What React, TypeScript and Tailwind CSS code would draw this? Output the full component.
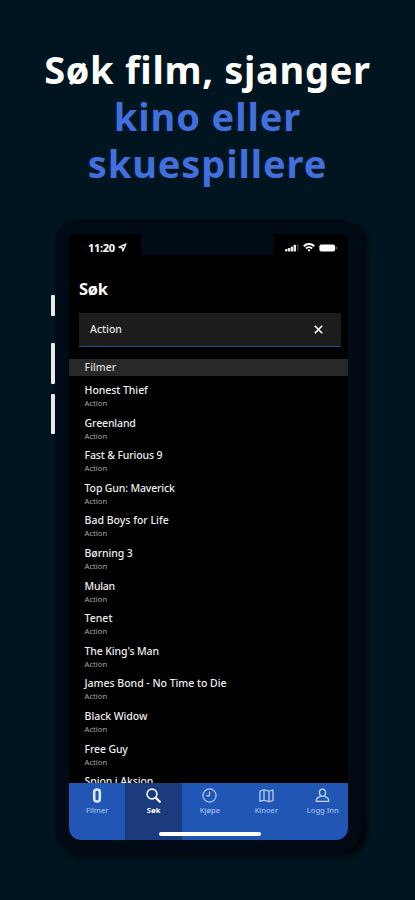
import type { ReactNode } from 'react';

interface Movie {
  title: string;
  genre: string;
  tracking: string;
}

interface TabProps {
  label: string;
  active?: boolean;
  children: ReactNode;
}

const MOVIES: Movie[] = [
  { title: 'Honest Thief', genre: 'Action', tracking: 'tracking-[-0.05px]' },
  { title: 'Greenland', genre: 'Action', tracking: 'tracking-[-0.15px]' },
  { title: 'Fast & Furious 9', genre: 'Action', tracking: 'tracking-[-0.15px]' },
  { title: 'Top Gun: Maverick', genre: 'Action', tracking: 'tracking-[-0.15px]' },
  { title: 'Bad Boys for Life', genre: 'Action', tracking: 'tracking-[0px]' },
  { title: 'Børning 3', genre: 'Action', tracking: 'tracking-[-0.1px]' },
  { title: 'Mulan', genre: 'Action', tracking: 'tracking-[-0.3px]' },
  { title: 'Tenet', genre: 'Action', tracking: 'tracking-[0px]' },
  { title: "The King's Man", genre: 'Action', tracking: 'tracking-[-0.12px]' },
  { title: 'James Bond - No Time to Die', genre: 'Action', tracking: 'tracking-[-0.02px]' },
  { title: 'Black Widow', genre: 'Action', tracking: 'tracking-[-0.05px]' },
  { title: 'Free Guy', genre: 'Action', tracking: 'tracking-[-0.15px]' },
  { title: 'Spion i Aksjon', genre: 'Action', tracking: 'tracking-[-0.1px]' },
];

function StatusBar() {
  return (
    <div className="flex h-5 shrink-0 justify-between">
      <div className="flex w-[72px] items-center pl-[19px] pt-[7px] text-[11px] leading-none font-bold text-white">
        <span className="tracking-[-0.3px]">11:20</span>
        <svg className="ml-[3px]" width="9" height="9" viewBox="0 0 9 9" fill="none" stroke="#e8e8e8" strokeWidth="1.4" strokeLinejoin="round">
          <path d="M8 1L1 4.200l3.300.5.500 3.300L8 1z" />
        </svg>
      </div>
      <div className="-mb-px w-[133px] rounded-b-[4px] bg-[#000b15]" />
      <div className="flex w-[74px] items-center gap-1 pt-[7px] pl-[11px]">
        <svg width="14" height="8" viewBox="0 0 14 8" fill="#e8e8e8">
          <rect x="0" y="5" width="2.5" height="2.500" rx=".4" />
          <rect x="2.900" y="4" width="2.500" height="3.500" rx=".4" />
          <rect x="5.800" y="2.500" width="2.500" height="5" rx=".4" />
          <rect x="8.700" y=".8" width="2.300" height="6.700" rx=".4" />
          <rect x="12" y="0" width="1.500" height="7.500" rx=".4" opacity=".25" />
        </svg>
        <svg width="12" height="9" viewBox="0 0 12 9" fill="none" stroke="#fff" strokeWidth="1.9">
          <path d="M.8 3.200a7.400 7.400 0 0 1 10.400 0M2.900 5.500a4.400 4.400 0 0 1 6.200 0" />
          <path d="M4.500 7L6 8.700 7.500 7A2 2 0 0 0 4.500 7z" fill="#fff" stroke="none" />
        </svg>
        <svg width="18" height="8" viewBox="0 0 18 8">
          <rect x=".4" y=".4" width="15.600" height="7.200" rx="1.800" fill="#fff" />
          <path d="M16.700 2.600v2.800c.7-.2.900-.8.900-1.400s-.2-1.200-.9-1.400z" fill="#bbb" />
        </svg>
      </div>
    </div>
  );
}

function MovieRow({ title, genre, tracking }: Movie) {
  return (
    <li className="h-[32.6px] shrink-0 pl-[15.6px] whitespace-nowrap">
      <p className={`text-[10.5px] leading-[15px] font-medium text-[#ededed] ${tracking}`}>{title}</p>
      <p className="text-[7.6px] leading-[10px] text-[#a8a8a8]">{genre}</p>
    </li>
  );
}

function Tab({ label, active, children }: TabProps) {
  return (
    <div
      className={`flex w-[56.4px] shrink-0 flex-col items-center pt-[5px] whitespace-nowrap ${
        active ? 'bg-[#1b3b7e] font-bold text-white' : 'bg-[#2156b5] text-[#b3cdf5]'
      }`}
    >
      <div className="flex h-[15px] items-center">{children}</div>
      <span className="mt-[2px] text-[7.6px] leading-[10px]">{label}</span>
    </div>
  );
}

export default function App() {
  return (
    <main className="flex h-[900px] w-[415px] flex-col overflow-hidden bg-[#00151f] font-['Noto_Sans',sans-serif]">
      <h1 className="h-[220px] shrink-0 pt-[46px] text-center text-[38px] leading-[47px] font-bold whitespace-nowrap text-white">
        <span className="block tracking-[0.7px]">Søk film, sjanger</span>
        <span className="block tracking-[0.9px] text-[#416fdd]">kino eller</span>
        <span className="block tracking-[0.9px] text-[#416fdd]">skuespillere</span>
      </h1>

      <div className="flex pl-[51px]">
        {/* volume and mute buttons */}
        <div className="flex w-[4px] shrink-0 flex-col pt-[75px]">
          <div className="h-[21px] rounded-[1px] bg-[#ececec]" />
          <div className="mt-[27px] h-[41px] rounded-[1px] bg-[#ececec]" />
          <div className="mt-[10px] h-10 rounded-[1px] bg-[#ececec]" />
        </div>

        <div className="h-[632px] w-[306px] rounded-[22px] bg-[#000b15] pt-[14px] pl-[14px] shadow-[5px_3px_5px_1px_#00060a]">
          <div className="flex h-[606px] w-[279px] flex-col overflow-hidden rounded-t-[6px] rounded-b-[12px] bg-black">
            <StatusBar />
            <h2 className="mt-[23px] pl-[10px] text-[16.5px] leading-[24px] font-bold tracking-[-0.3px] text-white">Søk</h2>

            <div className="mx-[10px] mt-[12px] flex h-[34px] w-[262px] shrink-0 items-center justify-between border-b border-[#254a87] bg-[#1c1c1c] pr-[18px] pl-[11px] text-[10.5px] font-medium text-[#e6e6e6]">
              <span>Action</span>
              <svg width="9" height="9" viewBox="0 0 9 9" stroke="#fff" strokeWidth="1.600">
                <path d="M.8.800l7.400 7.400M8.200.800L.8 8.200" />
              </svg>
            </div>

            <h3 className="mt-[12px] h-[17px] shrink-0 bg-[#282828] pl-[15.6px] text-[10.5px] leading-[17px] font-medium text-[#dcdcdc]">Filmer</h3>

            <ul className="flex min-h-0 flex-1 flex-col overflow-hidden pt-[7px]">
              {MOVIES.map((movie) => (
                <MovieRow key={movie.title} {...movie} />
              ))}
            </ul>

            <nav className="relative flex h-[57px] shrink-0">
              <Tab label="Filmer">
                <svg width="10" height="15" viewBox="0 0 10 15" fill="none">
                  <rect x="2.200" y="1.500" width="5.600" height="12" rx="2.500" stroke="#dbe8ff" strokeWidth="2.600" />
                </svg>
              </Tab>
              <Tab label="Søk" active>
                <svg width="15" height="15" viewBox="0 0 15 15" fill="none" stroke="#fff" strokeWidth="1.600" strokeLinecap="round">
                  <circle cx="6" cy="6" r="4.900" />
                  <path d="M9.800 9.800l4 4" strokeWidth="2.200" />
                </svg>
              </Tab>
              <Tab label="Kjøpe">
                <svg width="15" height="15" viewBox="0 0 15 15" fill="none" stroke="#b3cdf5" strokeWidth="1.200">
                  <circle cx="7.500" cy="7.500" r="6.600" />
                  <path d="M7.500 3.500v4.300H4.200" />
                </svg>
              </Tab>
              <Tab label="Kinoer">
                <svg width="15" height="15" viewBox="0 0 15 15" fill="none" stroke="#c6daf8" strokeWidth="1.200" strokeLinejoin="round">
                  <path d="M1 3l4-1.200 5 1.500 4-1.300v10.500l-4 1.200-5-1.500-4 1.200V3zM5 1.800v10.400M10 3.300v10.400" />
                </svg>
              </Tab>
              <Tab label="Logg Inn">
                <svg width="15" height="15" viewBox="0 0 15 15" fill="none" stroke="#c6daf8" strokeWidth="1.300" strokeLinejoin="round">
                  <path d="M7.500 1.200c-2 0-3 1.400-3 3.200 0 2 1.200 3.900 3 3.900s3-1.900 3-3.900c0-1.800-1-3.200-3-3.200z" />
                  <path d="M5.500 8.500L2.800 9.600c-1.200.5-1.500 1.600-1.500 3.700h12.400c0-2.100-.3-3.200-1.500-3.700L9.500 8.500" />
                </svg>
              </Tab>
              <div className="absolute bottom-[4px] left-[90px] h-[4px] w-[102px] rounded-full bg-white" />
            </nav>
          </div>
        </div>
      </div>
    </main>
  );
}
